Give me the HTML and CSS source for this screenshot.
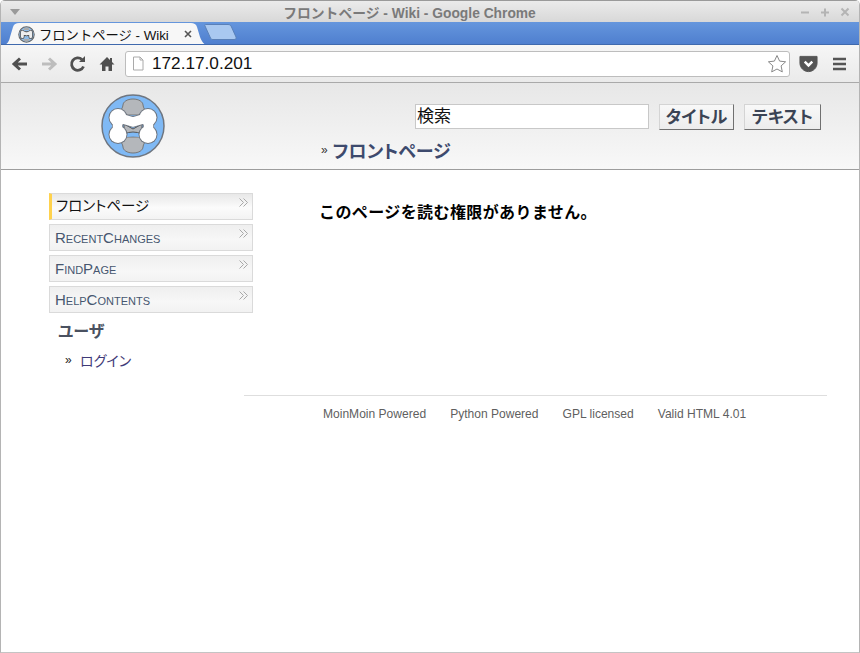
FILE: index.html
```html
<!DOCTYPE html>
<html lang="ja">
<head>
<meta charset="utf-8">
<title>フロントページ - Wiki</title>
<link rel="stylesheet" href="styles.css">
</head>
<body>
<div class="window">
  <div class="titlebar">
    <svg class="menu-arrow" width="10" height="6" viewBox="0 0 10 6"><path d="M0 0h10L5 6z" fill="#9a9a9a"/></svg>
    <div class="wintitle">フロントページ - Wiki - Google Chrome</div>
    <div class="winctl">
      <svg width="12" height="12" viewBox="0 0 12 12"><path d="M2 6.500h8" stroke="#b4b4b4" stroke-width="2"/></svg>
      <svg width="12" height="12" viewBox="0 0 12 12"><path d="M2 6.500h8M6 2.500v8" stroke="#b4b4b4" stroke-width="2"/></svg>
      <svg width="12" height="12" viewBox="0 0 12 12"><path d="M2.500 2.500l7 7M9.500 2.500l-7 7" stroke="#b4b4b4" stroke-width="2"/></svg>
    </div>
  </div>
  <div class="tabstrip">
    <div class="tab">
      <svg class="tab-shape" width="208" height="24" viewBox="0 0 208 24"><path d="M0 24C6 23 8 20 9 15L12 5C13 2 15 1 18 1H190C193 1 195 2 196 5L199 15C201 20 203 23 208 24Z" fill="#f7f7f7"/></svg>
      <svg class="favicon" width="17" height="17" viewBox="0 0 66 66">
        <circle cx="33" cy="33" r="30" fill="#8fbce8" stroke="#666" stroke-width="4"/>
        <path d="M33 6c8 0 11 4 11 10H22c0-6 3-10 11-10ZM22 50h22c0 6-3 10-11 10s-11-4-11-10Z" fill="#aaa"/>
        <path d="M17 24L33 31 49 24M17 24V42M49 24V42" fill="none" stroke="#555" stroke-width="17" stroke-linecap="round" stroke-linejoin="round"/>
        <path d="M17 24L33 31 49 24M17 24V42M49 24V42" fill="none" stroke="#eee" stroke-width="11" stroke-linecap="round" stroke-linejoin="round"/>
      </svg>
      <span class="tab-title">フロントページ - Wiki</span>
      <svg class="tab-close" width="8" height="8" viewBox="0 0 8 8"><path d="M1 1l6 6M7 1l-6 6" stroke="#555" stroke-width="1.600"/></svg>
    </div>
    <svg class="newtab" width="34" height="18" viewBox="0 0 34 18"><path d="M1.500 1.500H24C26 1.500 27 2.500 27.500 4L32 14C32.500 15.500 32 16.500 30 16.500H9C7.500 16.500 7 16 6.500 15L1 3C.7 2 .8 1.500 1.500 1.500Z" fill="#a9c8f0" stroke="#5a80b8"/></svg>
  </div>
  <div class="toolbar">
    <svg class="tool" width="18" height="16" viewBox="0 0 18 16"><path d="M16 8H4M9 2.500L3 8l6 5.500" fill="none" stroke="#505050" stroke-width="3"/></svg>
    <svg class="tool" width="18" height="16" viewBox="0 0 18 16"><path d="M2 8h12M9 2.500L15 8l-6 5.500" fill="none" stroke="#bdbdbd" stroke-width="3"/></svg>
    <svg class="tool" width="18" height="18" viewBox="0 0 18 18"><path d="M14.500 11.500A6.200 6.200 0 1 1 13 4.500" fill="none" stroke="#505050" stroke-width="2.800"/><path d="M10 7h6V1z" fill="#505050"/></svg>
    <svg class="tool" width="18" height="18" viewBox="0 0 18 18"><path d="M9 2L1.500 9.500H4V16h3.500v-4.500h3V16H14V9.500h2.500L14 7V3h-2v2z" fill="#505050"/></svg>
    <div class="omnibox">
      <svg class="pageicon" width="12" height="15" viewBox="0 0 12 15"><path d="M1.500 1H8L11 4V14H1.500Z" fill="#fff" stroke="#aaa"/><path d="M8 1V4H11" fill="none" stroke="#aaa"/></svg>
      <span class="url">172.17.0.201</span>
      <svg class="star" width="20" height="19" viewBox="0 0 20 19"><path d="M10 1.500l2.600 5.600 6 .7-4.500 4.100 1.200 6L10 15l-5.300 2.900 1.200-6L1.400 7.800l6-.7z" fill="#fff" stroke="#888"/></svg>
    </div>
    <svg class="pocket" width="19" height="18" viewBox="0 0 20 18"><path d="M1 1H19V8C19 13 15 17 10 17S1 13 1 8Z" fill="#555" stroke="#555" stroke-linejoin="round"/><path d="M6 6.500l4 4 4-4" fill="none" stroke="#fff" stroke-width="2.600"/></svg>
    <svg class="hamburger" width="13" height="14" viewBox="0 0 13 14"><path d="M0 2h13M0 7h13M0 12h13" stroke="#555" stroke-width="2.600"/></svg>
  </div>
  <header class="pagehead">
    <svg class="logo" width="66" height="66" viewBox="0 0 66 66">
      <circle cx="33" cy="33" r="31" fill="#7fb9f5" stroke="#6f7680" stroke-width="1.500"/>
      <path d="M33 6c6 0 10 3 10 6 0 3 3 5 3 10H20c0-5 3-7 3-10 0-3 4-6 10-6ZM20 44h26c0 5-3 7-3 10 0 3-4 6-10 6s-10-3-10-6c0-3-3-5-3-10Z" fill="#b4b7bb" stroke="#777"/>
      <path d="M23 22.500q10 4 20 0M23 43.500q10-4 20 0" fill="none" stroke="#7fb9f5" stroke-width="3.500"/>
      <path d="M24 31l9 5 9-5V41q-9-4-18 0Z" fill="#b4b7bb" stroke="#555"/>
      <path d="M18 24.500L33 29 48 24.500M17.500 24.500V41.500M48.500 24.500V41.500" fill="none" stroke="#6f7680" stroke-width="11" stroke-linejoin="round"/>
      <g fill="#6f7680"><circle cx="18" cy="24.500" r="9.500"/><circle cx="48" cy="24.500" r="9.500"/><circle cx="18" cy="41.500" r="9.500"/><circle cx="48" cy="41.500" r="9.500"/></g>
      <path d="M18 24.500L33 29 48 24.500M17.500 24.500V41.500M48.500 24.500V41.500" fill="none" stroke="#fff" stroke-width="9.500" stroke-linejoin="round"/>
      <g fill="#fff"><circle cx="18" cy="24.500" r="8.500"/><circle cx="48" cy="24.500" r="8.500"/><circle cx="18" cy="41.500" r="8.500"/><circle cx="48" cy="41.500" r="8.500"/></g>
    </svg>
    <div class="headmain">
      <form class="search">
        <input class="search-input" type="text" value="検索">
        <button class="btn" type="button">タイトル</button>
        <button class="btn" type="button">テキスト</button>
      </form>
      <div class="pagetitle"><span class="raquo">»</span><span class="pagename">フロントページ</span></div>
    </div>
  </header>
  <div class="content">
    <nav class="sidebar">
      <a class="navitem current">フロントページ<svg class="chev" width="9" height="9" viewBox="0 0 9 9"><path d="M.5.500l4 4-4 4M4.500.500l4 4-4 4" fill="none" stroke="#a8a8a8"/></svg></a>
      <a class="navitem sc">RecentChanges<svg class="chev" width="9" height="9" viewBox="0 0 9 9"><path d="M.5.500l4 4-4 4M4.500.500l4 4-4 4" fill="none" stroke="#a8a8a8"/></svg></a>
      <a class="navitem sc">FindPage<svg class="chev" width="9" height="9" viewBox="0 0 9 9"><path d="M.5.500l4 4-4 4M4.500.500l4 4-4 4" fill="none" stroke="#a8a8a8"/></svg></a>
      <a class="navitem sc">HelpContents<svg class="chev" width="9" height="9" viewBox="0 0 9 9"><path d="M.5.500l4 4-4 4M4.500.500l4 4-4 4" fill="none" stroke="#a8a8a8"/></svg></a>
      <h3 class="sidehead">ユーザ</h3>
      <div class="login"><span class="bullet">»</span><a class="loginlink">ログイン</a></div>
    </nav>
    <div class="mainwrap">
      <main class="msg"><strong>このページを読む権限がありません。</strong></main>
      <footer class="foot">
        <span>MoinMoin Powered</span><span>Python Powered</span><span>GPL licensed</span><span>Valid HTML 4.01</span>
      </footer>
    </div>
  </div>
</div>
</body>
</html>
```
FILE: styles.css
```css
* { box-sizing: border-box; }
html, body { margin: 0; height: 100%; }
body { font-family: "Liberation Sans", "Noto Sans CJK JP", sans-serif; background: #fff; overflow: hidden; }
.window { width: 860px; height: 653px; border: 1px solid #b4b4b4; border-top: 0; border-bottom: 1px solid #c4c4c4; border-radius: 5px 5px 0 0; overflow: hidden; background: #fff; }

.titlebar { height: 22px; display: flex; align-items: center; padding: 0 8px 0 9px; background: linear-gradient(#ebebeb, #d8d8d8); border-top: 1px solid #9a9a9a; }
.menu-arrow { flex: none; }
.wintitle { flex: 1; text-align: center; font-size: 13.8px; font-weight: bold; color: #7a7a7a; }
.winctl { display: flex; gap: 8px; }
.winctl svg { display: block; }

.tabstrip { height: 23px; display: flex; align-items: flex-end; background: linear-gradient(#6596dd, #4f7fcf); border-bottom: 1px solid #3f69ad; overflow: hidden; }
.tab { position: relative; width: 208px; height: 22px; flex: none; display: flex; align-items: center; padding: 0 0 0 17px; margin-bottom: -1px; }
.tab-shape { position: absolute; left: 0; top: -1px; }
.favicon, .tab-title, .tab-close { position: relative; }
.favicon { flex: none; }
.tab-title { font-size: 13.300px; color: #111; margin-left: 4px; width: 145px; white-space: nowrap; }
.tab-close { flex: none; }
.newtab { flex: none; margin: 0 0 3px -5px; }

.toolbar { height: 38px; display: flex; align-items: center; padding: 0 10px; background: linear-gradient(#f6f6f6, #eaeaea); border-bottom: 1px solid #a9a9a9; }
.tool { flex: none; margin-right: 11px; }
.omnibox { width: 665px; height: 26px; margin-left: -2px; flex: none; display: flex; align-items: center; background: #fff; border: 1px solid #bdbdbd; border-radius: 3px; padding: 0 2px 0 6px; }
.pageicon { flex: none; }
.url { flex: 1; font-size: 17.200px; color: #111; margin-left: 8px; }
.star { flex: none; }
.pocket { flex: none; margin-left: 9px; }
.hamburger { flex: none; margin-left: 15px; }

.pagehead { height: 87px; display: flex; background: linear-gradient(#e7e7e7, #f8f8f8); border-bottom: 1px solid #9d9d9d; }
.logo { flex: none; margin: 10px 0 0 99px; }
.headmain { flex: none; margin-left: 155px; width: 530px; }
.search { display: flex; align-items: flex-start; margin: 21px 0 0 94px; }
.search-input { width: 234px; height: 25px; border: 1px solid #c8c8c8; background: #fff; padding: 0 1px 5px; font: 17px "Noto Sans CJK JP", sans-serif; color: #111; margin: 0 10px 0 0; outline: 0; flex: none; }
.btn { height: 26px; padding: 0 0 3px; width: 75px; margin: 0 10px 0 0; font: bold 17px/20px "Noto Sans CJK JP", sans-serif; font-feature-settings: "palt"; color: #3b4455; background: linear-gradient(#f8f8f8, #ececec); border: 1px solid; border-color: #d4d4d4 #707070 #707070 #d4d4d4; white-space: nowrap; flex: none; }
.btn + .btn { width: 77px; }
.pagetitle { display: flex; align-items: center; margin-top: 6px; height: 28px; }
.raquo { font-size: 12px; color: #333; margin-right: 5px; }
.pagename { font: bold 18px "Noto Sans CJK JP", sans-serif; font-feature-settings: "palt"; color: #3d4a6d; }

.content { display: flex; }
.sidebar { flex: none; width: 204px; margin: 23px 0 0 48px; }
.navitem { display: block; height: 27px; margin-bottom: 4px; padding: 0 0 0 5px; line-height: 25px; font-size: 15px; color: #46566f; background: linear-gradient(#efefef, #f7f7f7 60%, #f2f2f2); border: 1px solid #dadada; position: relative; }
.chev { position: absolute; right: 4px; top: 4px; }
.current { border-left: 3px solid #ffd24d; color: #111; font-family: "Noto Sans CJK JP", sans-serif; font-size: 14.500px; font-feature-settings: "palt"; padding-left: 4px; line-height: 22px; background: linear-gradient(#e8e8e8, #fbfbfb 55%, #f3f3f3); }
.sc { font-variant: small-caps; }
.sidehead { margin: 6px 0 0 9px; font: bold 16px/22px "Noto Sans CJK JP", sans-serif; font-feature-settings: "palt"; color: #4a5160; }
.login { margin: 9px 0 0 16px; display: flex; align-items: center; height: 20px; }
.bullet { font-size: 12px; color: #222; width: 15px; }
.loginlink { font: 14px "Noto Sans CJK JP", sans-serif; font-feature-settings: "palt"; color: #3f3a78; }

.mainwrap { flex: none; width: 583px; margin-left: -9px; }
.msg { height: 225px; padding: 29px 0 0 75px; font: 16px "Noto Sans CJK JP", sans-serif; letter-spacing: .4px; color: #000; }
.msg strong { font-weight: bold; }
.foot { border-top: 1px solid #dedede; padding: 10px 0 0 79px; display: flex; gap: 24px; font-size: 12.060px; line-height: 16px; color: #5f5f5f; }
```
